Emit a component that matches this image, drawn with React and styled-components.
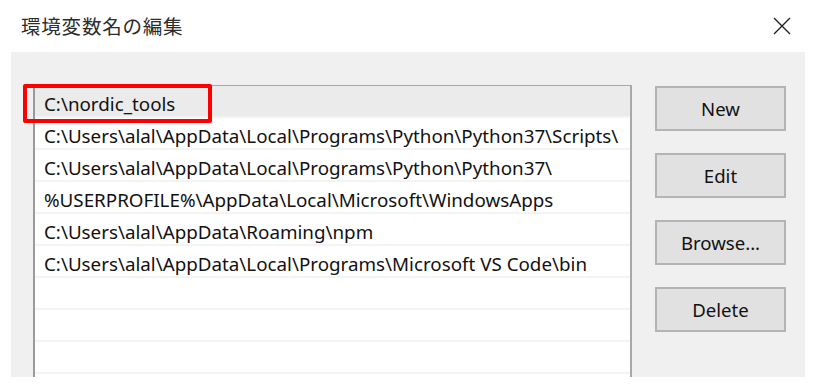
import React from 'react';
import styled, { createGlobalStyle } from 'styled-components';

const GlobalStyle = createGlobalStyle`
	html, body {
		margin: 0;
		padding: 0;
		background: #ffffff;
	}
	body {
		font-family: "Noto Sans", "Open Sans", sans-serif;
	}
`;

const Window = styled.div`
	width: 817px;
	height: 389px;
	overflow: hidden;
	background: #ffffff;
`;

const TitleBar = styled.div`
	height: 52px;
	display: flex;
	align-items: center;
	justify-content: space-between;
	padding: 0 26px 0 21px;
	box-sizing: border-box;
`;

const Title = styled.div`
	font-family: "Noto Sans CJK JP", sans-serif;
	font-size: 19.5px;
	color: #2b2b2b;
	letter-spacing: 0.8px;
	margin-top: -2px;
`;

const CloseButton = styled.div`
	width: 19px;
	height: 19px;
	display: flex;
	align-items: center;
	justify-content: center;
	margin-top: -1px;
`;

const Panel = styled.div`
	margin: 0 12px 0 11px;
	height: 325px;
	background: #f0f0f0;
	display: flex;
	gap: 23px;
	padding: 33px 0 0 22px;
	box-sizing: border-box;
	overflow: hidden;
`;

const ListBox = styled.div`
	position: relative;
	width: 599px;
	flex-shrink: 0;
	background: #ffffff;
	border-top: 1px solid #a8a8a8;
	border-right: 2px solid #a8a8a8;
	border-left: 2px solid #9a9a9a;
	box-sizing: border-box;
	height: 400px;
`;

const Row = styled.div`
	height: 32px;
	box-sizing: border-box;
	display: flex;
	align-items: center;
	padding: 5px 0 0 9px;
	border-bottom: 2px solid #f3f3f3;
	background: ${(p) => (p.selected ? '#ebebeb' : '#ffffff')};
	font-size: 18.8px;
	color: #111111;
	white-space: nowrap;
	overflow: hidden;
`;

const Highlight = styled.div`
	position: absolute;
	left: -12px;
	top: -2px;
	width: 189px;
	height: 39px;
	border: 4px solid #ff0000;
	border-radius: 2px;
	box-sizing: border-box;
`;

const ButtonColumn = styled.div`
	display: flex;
	flex-direction: column;
	gap: 22px;
	padding-top: 1px;
`;

const Button = styled.div`
	width: 131px;
	height: 45px;
	box-sizing: border-box;
	border: 2px solid #b4b4b4;
	background: #e1e1e1;
	display: flex;
	align-items: center;
	justify-content: center;
	font-size: 18.6px;
	color: #111111;
`;

const entries = [
	'C:\\nordic_tools',
	'C:\\Users\\alal\\AppData\\Local\\Programs\\Python\\Python37\\Scripts\\',
	'C:\\Users\\alal\\AppData\\Local\\Programs\\Python\\Python37\\',
	'%USERPROFILE%\\AppData\\Local\\Microsoft\\WindowsApps',
	'C:\\Users\\alal\\AppData\\Roaming\\npm',
	'C:\\Users\\alal\\AppData\\Local\\Programs\\Microsoft VS Code\\bin',
	'',
	'',
	'',
	'',
];

const buttons = ['New', 'Edit', 'Browse...', 'Delete'];

export default function App() {
	return (
		<Window>
			<GlobalStyle />
			<TitleBar>
				<Title>環境変数名の編集</Title>
				<CloseButton>
					<svg width="18" height="18" viewBox="0 0 18 18">
						<path d="M1 1 L17 17 M17 1 L1 17" stroke="#222" strokeWidth="1.4" fill="none" />
					</svg>
				</CloseButton>
			</TitleBar>
			<Panel>
				<ListBox>
					{entries.map((e, i) => (
						<Row key={i} selected={i === 0}>
							{e}
						</Row>
					))}
					<Highlight />
				</ListBox>
				<ButtonColumn>
					{buttons.map((b) => (
						<Button key={b}>{b}</Button>
					))}
				</ButtonColumn>
			</Panel>
		</Window>
	);
}
